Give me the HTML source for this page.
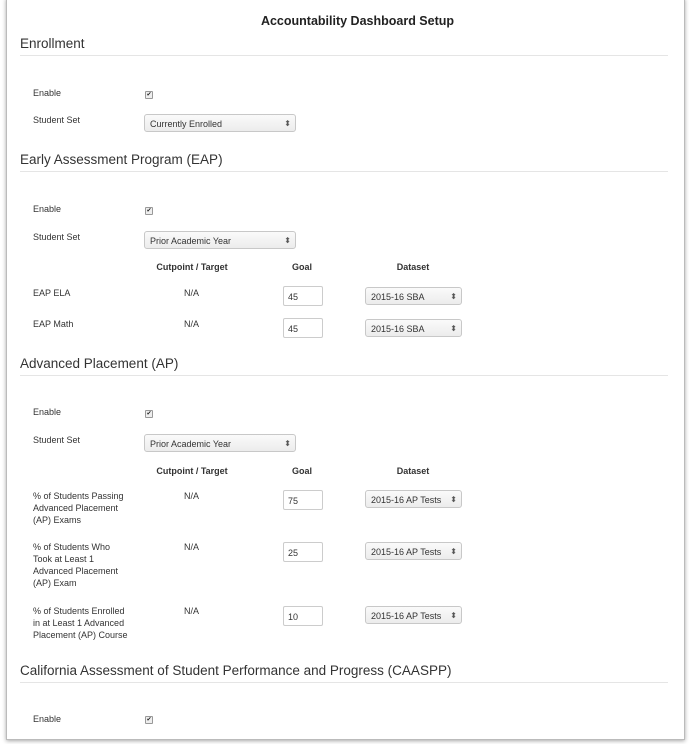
<!DOCTYPE html>
<html><head><style>
body{margin:0;width:689px;height:744px;background:#fff;position:relative;overflow:hidden;font-family:"Liberation Sans",sans-serif;color:#333}
.frame{position:absolute;left:6px;top:-2px;width:677px;height:740px;border:1px solid #bbb;box-shadow:0 1px 4px rgba(0,0,0,.35);background:#fff}
.a{position:absolute;white-space:nowrap}
.t{font-size:9px;line-height:12px}
.h{font-size:13.5px;color:#333;margin-top:1px}
.hr{position:absolute;left:20px;width:648px;height:1px;background:#e5e5e5}
.b{font-weight:bold;font-size:9px}
.cb{position:absolute;width:6px;height:6px;border:1px solid #999;border-radius:1px;background:#eee;font-size:6px;line-height:6px;text-align:center;color:#222}
.sel{position:absolute;height:18px;border:1px solid #c8c8c8;border-radius:3px;background:linear-gradient(#fafafa,#ececec);font-size:9px;line-height:18px;padding-left:5px;box-sizing:border-box;color:#333}
.sel:after{content:"⬍";position:absolute;right:4px;top:0;font-size:8px;color:#555}
.inp{position:absolute;width:40px;height:20px;border:1px solid #ccc;box-sizing:border-box;font-size:9px;line-height:20px;padding-left:4px;background:#fff;border-radius:2px}
</style></head><body>
<div class="frame"></div>
<div class="a" style="left:0;width:715px;text-align:center;top:14px;font-weight:bold;font-size:12.5px;color:#222">Accountability Dashboard Setup</div>

<div class="a h" style="left:20px;top:35px">Enrollment</div><div class="hr" style="top:55px"></div>
<div class="a t" style="left:33px;top:87px">Enable</div><div class="cb" style="left:145px;top:91px">✔</div>
<div class="a t" style="left:33px;top:114px">Student Set</div><div class="sel" style="left:144px;top:114px;width:152px">Currently Enrolled</div>

<div class="a h" style="left:20px;top:151px">Early Assessment Program (EAP)</div><div class="hr" style="top:171px"></div>
<div class="a t" style="left:33px;top:203px">Enable</div><div class="cb" style="left:145px;top:207px">✔</div>
<div class="a t" style="left:33px;top:231px">Student Set</div><div class="sel" style="left:144px;top:231px;width:152px">Prior Academic Year</div>
<div class="a b" style="left:142px;width:100px;text-align:center;top:262px">Cutpoint / Target</div>
<div class="a b" style="left:272px;width:60px;text-align:center;top:262px">Goal</div>
<div class="a b" style="left:363px;width:100px;text-align:center;top:262px">Dataset</div>
<div class="a t" style="left:33px;top:287px">EAP ELA</div><div class="a t" style="left:184px;top:287px">N/A</div>
<div class="inp" style="left:283px;top:286px">45</div><div class="sel" style="left:365px;top:287px;width:97px">2015-16 SBA</div>
<div class="a t" style="left:33px;top:318px">EAP Math</div><div class="a t" style="left:184px;top:318px">N/A</div>
<div class="inp" style="left:283px;top:318px">45</div><div class="sel" style="left:365px;top:319px;width:97px">2015-16 SBA</div>

<div class="a h" style="left:20px;top:355px">Advanced Placement (AP)</div><div class="hr" style="top:375px"></div>
<div class="a t" style="left:33px;top:406px">Enable</div><div class="cb" style="left:145px;top:410px">✔</div>
<div class="a t" style="left:33px;top:434px">Student Set</div><div class="sel" style="left:144px;top:434px;width:152px">Prior Academic Year</div>
<div class="a b" style="left:142px;width:100px;text-align:center;top:466px">Cutpoint / Target</div>
<div class="a b" style="left:272px;width:60px;text-align:center;top:466px">Goal</div>
<div class="a b" style="left:363px;width:100px;text-align:center;top:466px">Dataset</div>
<div class="a t" style="left:33px;top:490px">% of Students Passing<br>Advanced Placement<br>(AP) Exams</div><div class="a t" style="left:184px;top:490px">N/A</div>
<div class="inp" style="left:283px;top:490px">75</div><div class="sel" style="left:365px;top:490px;width:97px">2015-16 AP Tests</div>
<div class="a t" style="left:33px;top:541px">% of Students Who<br>Took at Least 1<br>Advanced Placement<br>(AP) Exam</div><div class="a t" style="left:184px;top:541px">N/A</div>
<div class="inp" style="left:283px;top:542px">25</div><div class="sel" style="left:365px;top:542px;width:97px">2015-16 AP Tests</div>
<div class="a t" style="left:33px;top:605px">% of Students Enrolled<br>in at Least 1 Advanced<br>Placement (AP) Course</div><div class="a t" style="left:184px;top:605px">N/A</div>
<div class="inp" style="left:283px;top:606px">10</div><div class="sel" style="left:365px;top:606px;width:97px">2015-16 AP Tests</div>

<div class="a h" style="left:20px;top:662px">California Assessment of Student Performance and Progress (CAASPP)</div><div class="hr" style="top:682px"></div>
<div class="a t" style="left:33px;top:713px">Enable</div><div class="cb" style="left:145px;top:716px">✔</div>
</body></html>
